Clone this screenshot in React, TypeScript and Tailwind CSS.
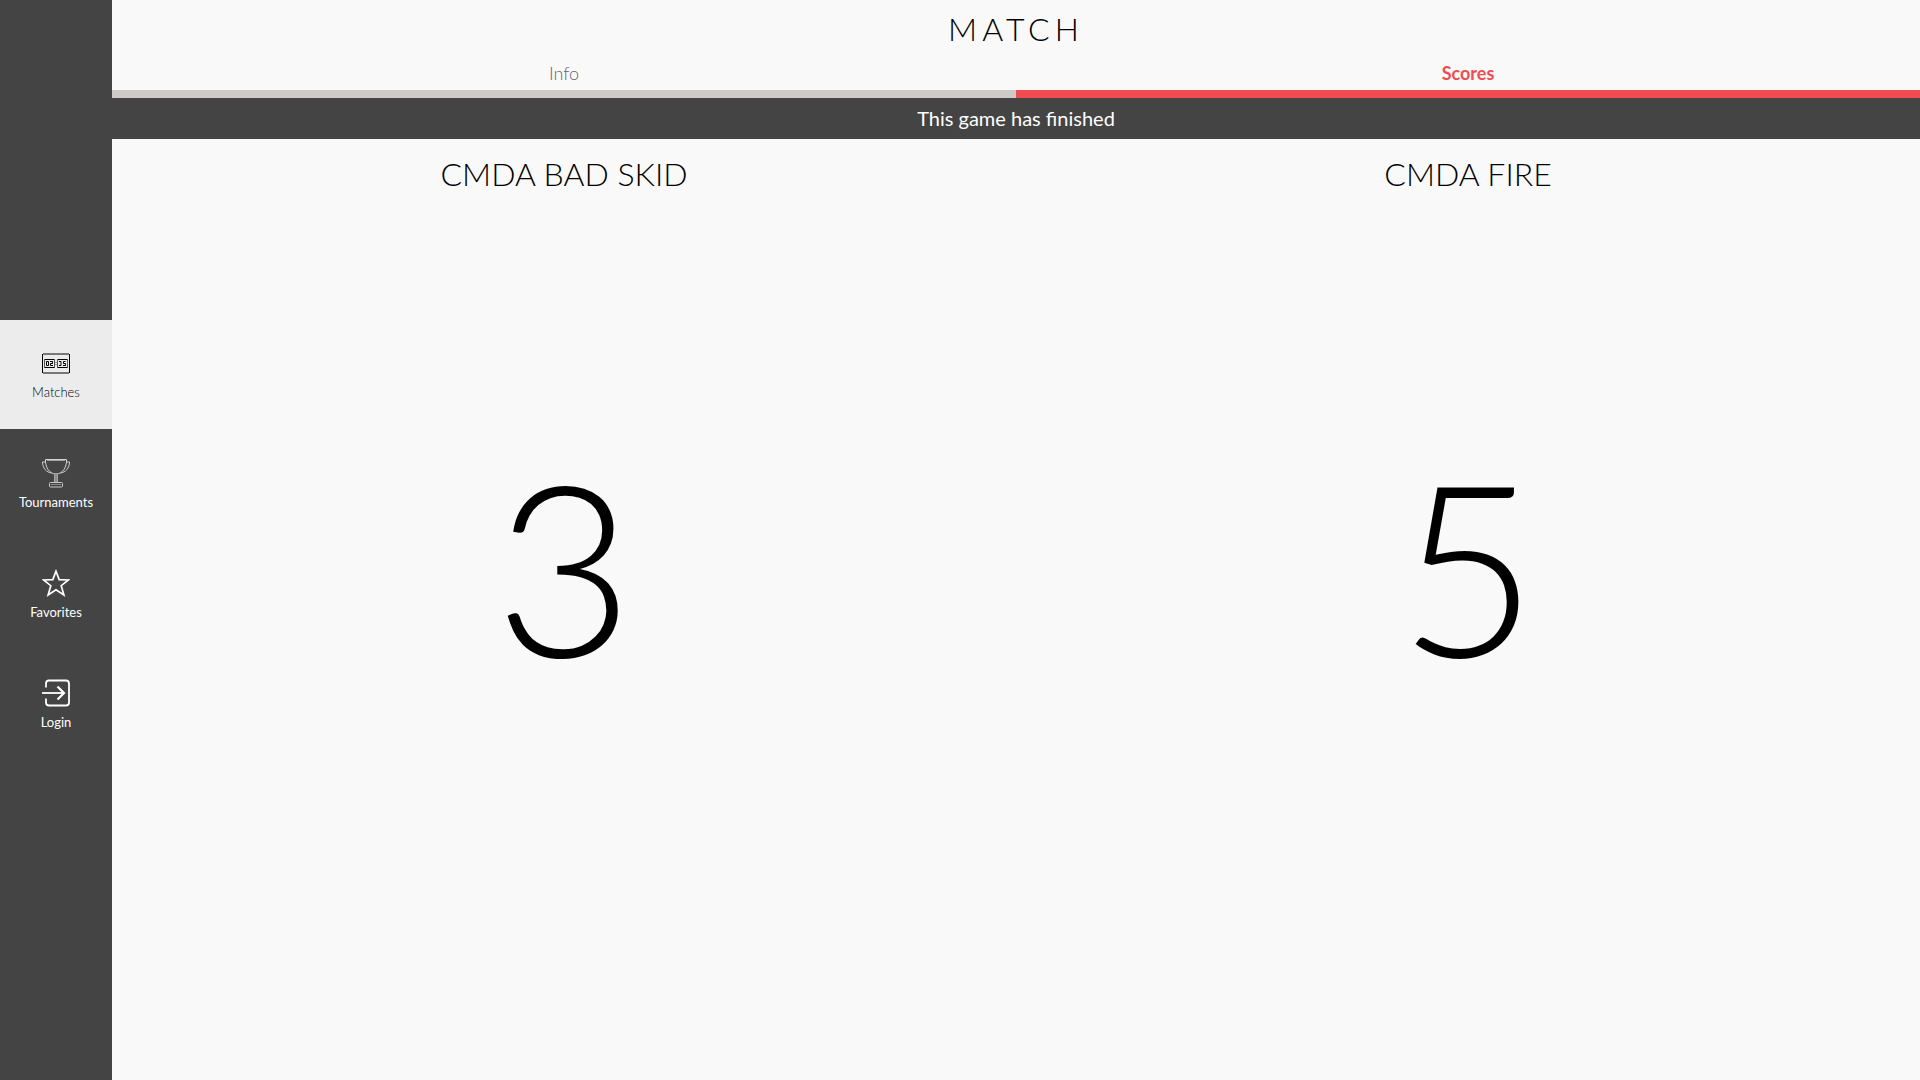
import type { ReactNode } from "react";

function MatchesIcon() {
  return (
    <svg viewBox="0 0 28 28" className="size-7" fill="none" stroke="#000" aria-hidden="true">
      <path d="M1 5h26M1 24h26" stroke="#777" strokeWidth="2" />
      <path d="M.5 5v19M27.5 5v19" />
      <path d="M12 13.500h4M12 15.500h4" stroke="#999" />
      <path d="M2.500 10v9M12.500 10v9M15.500 10v9M25.500 10v9" stroke="#555" />
      <path d="M3 10.500h9M3 18.500h9M16 10.500h9M16 18.500h9" />
      <path d="M4.500 12.500h2v4h-2zM8 12.500h2.500v2h-2v2H11M17 12.500h2v4h-2M23.500 12.500h-2v2h2v2H21" />
    </svg>
  );
}

function TrophyIcon() {
  return (
    <svg viewBox="0 0 28 30" className="h-[30px] w-7" fill="none" stroke="#d4d4d4" aria-hidden="true">
      <path d="M3.500 1.500h21c.5 7-3.500 14.500-10.500 14.500S3 8.500 3.500 1.500z" />
      <path d="M5 2.500h18" stroke="#a5a5a5" />
      <path d="M3.500 4H.5c0 6 4 10.500 9 11M24.500 4h3c0 6-4 10.500-9 11" stroke="#cdcdcd" />
      <path d="M14 16v8" stroke="#a5a5a5" strokeWidth="4" />
      <path d="M14 16v8" stroke="#777" />
      <rect x="7.500" y="24.500" width="13" height="4.500" rx="1" stroke="#c8c8c8" />
      <path d="M9 26.500h10" stroke="#8a8a8a" />
    </svg>
  );
}

function StarIcon() {
  return (
    <svg viewBox="0 0 28 28" className="size-7" fill="none" stroke="#fff" strokeWidth="1.700" aria-hidden="true">
      <path d="M14 2.200l3.200 8.400 9.200.400-7.200 5.700 2.700 9.300-7.900-5.200-7.900 5.200 2.700-9.300L1.600 11l9.200-.4z" />
    </svg>
  );
}

function LoginIcon() {
  return (
    <svg viewBox="0 0 28 28" className="size-7" fill="none" stroke="#fff" strokeWidth="1.800" aria-hidden="true">
      <path d="M4 8.500V4.500Q4 1.500 7 1.500h17q3 0 3 3v19q0 3-3 3H7q-3 0-3-3v-4" />
      <path d="M0 14h22" />
      <path d="M15.500 7.500L22 14l-6.500 6.500" strokeWidth="2.200" />
    </svg>
  );
}

function NavItem({ label, icon, active = false }: { label: string; icon: ReactNode; active?: boolean }) {
  return (
    <a
      href="#"
      aria-current={active ? "page" : undefined}
      className={
        active
          ? "flex h-[110px] flex-col items-center justify-center gap-1 border-b border-[#444] bg-[#ececec] text-[13px] leading-5 font-light text-black"
          : "flex h-[110px] flex-col items-center justify-center gap-1 border-b border-[#444] text-[13px] leading-5 text-white"
      }
    >
      <span className="flex h-[30px] items-center">{icon}</span>
      {label}
    </a>
  );
}

function Team({ name, score }: { name: string; score: number }) {
  return (
    <section className="flex flex-1 flex-col items-center text-black">
      <h2 className="mt-[15px] text-[32px] leading-10 font-light">{name}</h2>
      <p className="mt-[226px] text-[240px] leading-[288px] font-light">{score}</p>
    </section>
  );
}

export default function App() {
  return (
    <div className="flex min-h-screen bg-[#f9f9f9] font-['Lato',sans-serif]">
      <nav className="flex w-28 shrink-0 flex-col justify-center bg-[#444]">
        <NavItem label="Matches" icon={<MatchesIcon />} active />
        <NavItem label="Tournaments" icon={<TrophyIcon />} />
        <NavItem label="Favorites" icon={<StarIcon />} />
        <NavItem label="Login" icon={<LoginIcon />} />
      </nav>
      <div className="flex flex-1 flex-col">
        <h1 className="pt-[9px] text-center text-[32px] leading-10 font-light tracking-[5px] text-black">MATCH</h1>
        <div className="mt-2 flex text-center text-[18px] leading-6">
          <a href="#" className="flex-1 border-b-8 border-[#cfcaca] pt-1 pb-[5px] font-light text-[#666]">Info</a>
          <a href="#" aria-current="page" className="flex-1 border-b-8 border-[#f04c52] pt-1 pb-[5px] font-bold text-[#f04c52]">Scores</a>
        </div>
        <p className="bg-[#444] py-2 text-center text-[20px] leading-[25px] text-white">This game has finished</p>
        <main className="flex flex-1">
          <Team name="CMDA BAD SKID" score={3} />
          <Team name="CMDA FIRE" score={5} />
        </main>
      </div>
    </div>
  );
}
